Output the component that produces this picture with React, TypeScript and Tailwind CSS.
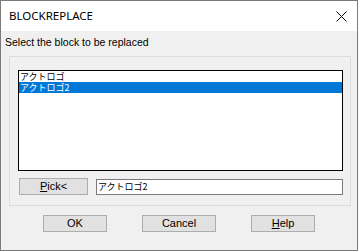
export default function App() {
  const items = ["アクトロゴ", "アクトロゴ2"];
  const selected = 1;

  return (
    <div className="w-[358px] h-[251px] border border-[#7a7a7a] bg-[#f0f0f0] flex flex-col font-['Liberation_Sans','Noto_Sans_CJK_JP',sans-serif] text-black">
      {/* Title bar */}
      <div className="h-[30px] bg-white flex items-center justify-between pl-[8px] pr-[10px]">
        <span className="text-[11.5px] font-['Noto_Sans',sans-serif] text-black leading-none">BLOCKREPLACE</span>
        <svg width="11" height="11" viewBox="0 0 11 11">
          <path d="M0.5 0.5 L10.5 10.5 M10.5 0.5 L0.5 10.5" stroke="#000" strokeWidth="1" />
        </svg>
      </div>

      {/* Body */}
      <div className="flex flex-col pt-[5px]">
        <p className="pl-[4px] text-[10.5px] leading-[13px]">Select the block to be replaced</p>

        <div className="ml-[8px] mt-[7px] w-[342px] h-[150px] border border-[#dcdcdc] flex flex-col">
          {/* List */}
          <div className="ml-[8px] mt-[13px] w-[325px] h-[101px] border border-black bg-white">
            <ul>
              {items.map((item, i) => (
                <li
                  key={item}
                  className={
                    i === selected
                      ? "h-[11px] leading-[11px] pl-[1px] text-[9px] overflow-hidden bg-[#0078d7] text-white font-['Noto_Sans_CJK_JP',sans-serif]"
                      : "h-[11px] leading-[11px] pl-[1px] text-[9px] overflow-hidden text-black font-['Noto_Sans_CJK_JP',sans-serif]"
                  }
                >
                  {item}
                </li>
              ))}
            </ul>
          </div>

          {/* Pick row */}
          <div className="flex items-start mt-[7px] ml-[9px]">
            <button className="w-[69px] h-[17px] border border-[#adadad] bg-[#e1e1e1] text-[11px] leading-none flex items-center justify-center">
              <span>
                <span className="underline">P</span>ick&lt;
              </span>
            </button>
            <div className="ml-[8px] mt-[1px] w-[247px] h-[16px] border border-[#7a7a7a] bg-white text-[9px] leading-[14px] pl-[1px] overflow-hidden font-['Noto_Sans_CJK_JP',sans-serif]">
              アクトロゴ2
            </div>
          </div>
        </div>

        {/* Buttons */}
        <div className="flex mt-[9px] ml-[42px] gap-[35px]">
          <button className="w-[64px] h-[17px] border border-[#adadad] bg-[#e1e1e1] text-[11px] leading-none flex items-center justify-center">
            OK
          </button>
          <button className="w-[74px] h-[17px] border border-[#adadad] bg-[#e1e1e1] text-[11px] leading-none flex items-center justify-center">
            Cancel
          </button>
          <button className="w-[64px] h-[17px] border border-[#adadad] bg-[#e1e1e1] text-[11px] leading-none flex items-center justify-center">
            <span>
              <span className="underline">H</span>elp
            </span>
          </button>
        </div>
      </div>
    </div>
  );
}
